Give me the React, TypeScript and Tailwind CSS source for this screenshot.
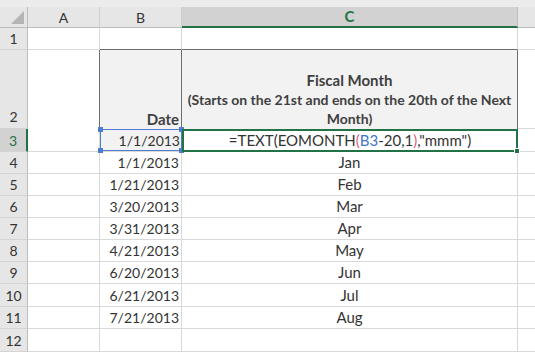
import React from "react";

const dates = ["1/1/2013", "1/21/2013", "3/20/2013", "3/31/2013", "4/21/2013", "6/20/2013", "6/21/2013", "7/21/2013"];
const months = ["Jan", "Feb", "Mar", "Apr", "May", "Jun", "Jul", "Aug"];

function RowHead({ n, active }: { n: number; active?: boolean }) {
  return (
    <div
      className={
        "flex items-center justify-center text-[14px] border-b border-[#d4d4d4] " +
        (active
          ? "bg-[#d2d2d2] text-[#217346] border-r-2 border-r-[#217346]"
          : "bg-[#e6e6e6] text-[#333] border-r border-r-[#bdbdbd]")
      }
    >
      {n}
    </div>
  );
}

export default function App() {
  return (
    <div
      className="w-[535px] h-[352px] overflow-hidden bg-white text-[#333]"
      style={{ fontFamily: "Lato, 'Open Sans', sans-serif" }}
    >
      <div className="grid grid-cols-[28px_72px_82px_336px_17px] grid-rows-[7px_21px_22px_79px_23px_22px_22px_22px_22px_22px_22px_23px_22px_23px]">
        {/* top band */}
        <div className="col-span-5 bg-[#ececec]" />

        {/* column headers */}
        <div className="relative bg-[#e6e6e6] border-r border-b border-[#bdbdbd]">
          <svg className="absolute left-[10px] top-[3px]" width="15" height="15" viewBox="0 0 15 15">
            <polygon points="14,1 14,14 1,14" fill="#b5b5b5" />
          </svg>
        </div>
        <div className="flex items-center justify-center bg-[#e6e6e6] border-r border-r-[#cfcfcf] border-b border-b-[#bdbdbd] text-[14px]">A</div>
        <div className="flex items-center justify-center bg-[#e6e6e6] border-r border-r-[#cfcfcf] border-b border-b-[#bdbdbd] text-[14px]">B</div>
        <div className="flex items-center justify-center bg-[#d2d2d2] border-b-2 border-b-[#217346] border-r border-r-[#bfbfbf] text-[15px] font-bold text-[#217346]">C</div>
        <div className="bg-[#e6e6e6] border-b border-b-[#bdbdbd]" />

        {/* row 1 */}
        <RowHead n={1} />
        <div className="border-r border-b border-[#d9d9d9]" />
        <div className="border-r border-b border-[#d9d9d9] border-b-[#6e6e6e]" />
        <div className="border-r border-b border-[#d9d9d9] border-b-[#6e6e6e]" />
        <div className="border-b border-[#d9d9d9]" />

        {/* row 2 */}
        <div className="flex items-end justify-center pb-[1px] text-[14px] bg-[#e6e6e6] border-r border-r-[#bdbdbd] border-b border-b-[#d4d4d4]">2</div>
        <div className="border-r border-[#6e6e6e]" />
        <div className="flex items-end justify-end pr-[2px] pb-[0px] bg-[#f2f2f2] border-r border-r-[#6e6e6e] font-bold text-[15px] text-[#404040] leading-[19px]">
          Date
        </div>
        <div className="flex flex-col items-center justify-end pb-[1px] bg-[#f2f2f2] border-r border-r-[#6e6e6e] font-bold text-[#404040] text-center leading-[19px]">
          <div className="text-[15px]">Fiscal Month</div>
          <div className="text-[14px] px-[3px]">(Starts on the 21st and ends on the 20th of the Next Month)</div>
        </div>
        <div className="border-b border-[#d9d9d9]" />

        {/* row 3 */}
        <RowHead n={3} active />
        <div className="border-r border-b border-[#d9d9d9]" />
        <div className="relative flex items-center justify-end pr-[2px] text-[14px] bg-[#f2f2f2] border-b border-[#d9d9d9]">
          1/1/2013
          <div className="absolute inset-0 border border-[#4f7bd0]" />
          <div className="absolute -left-[2px] -top-[2px] w-[5px] h-[5px] bg-[#4f7bd0]" />
          <div className="absolute -right-[2px] -top-[2px] w-[5px] h-[5px] bg-[#4f7bd0]" />
          <div className="absolute -left-[2px] -bottom-[2px] w-[5px] h-[5px] bg-[#4f7bd0]" />
          <div className="absolute -right-[2px] -bottom-[2px] w-[5px] h-[5px] bg-[#4f7bd0]" />
        </div>
        <div className="relative flex items-center justify-center text-[15px] border-2 border-[#217346]">
          <span>
            =TEXT(EOMONTH<span className="text-[#e0617f]">(</span>
            <span className="text-[#3f77c9]">B3</span>-20,1<span className="text-[#e0617f]">)</span>,"mmm")
          </span>
          <div className="absolute -right-[4px] -bottom-[4px] w-[6px] h-[6px] bg-[#217346] border border-white" />
        </div>
        <div className="border-b border-[#d9d9d9]" />

        {/* rows 4-11 */}
        {dates.map((d, i) => (
          <React.Fragment key={i}>
            <RowHead n={i + 4} />
            <div className="border-r border-b border-[#d9d9d9]" />
            <div className="flex items-center justify-end pr-[2px] text-[14px] border-r border-b border-[#d9d9d9]">{d}</div>
            <div className="flex items-center justify-center text-[15px] border-r border-b border-[#d9d9d9]">{months[i]}</div>
            <div className="border-b border-[#d9d9d9]" />
          </React.Fragment>
        ))}

        {/* row 12 */}
        <RowHead n={12} />
        <div className="border-r border-b border-[#d9d9d9]" />
        <div className="border-r border-b border-[#d9d9d9]" />
        <div className="border-r border-b border-[#d9d9d9]" />
        <div className="border-b border-[#d9d9d9]" />
      </div>
    </div>
  );
}
